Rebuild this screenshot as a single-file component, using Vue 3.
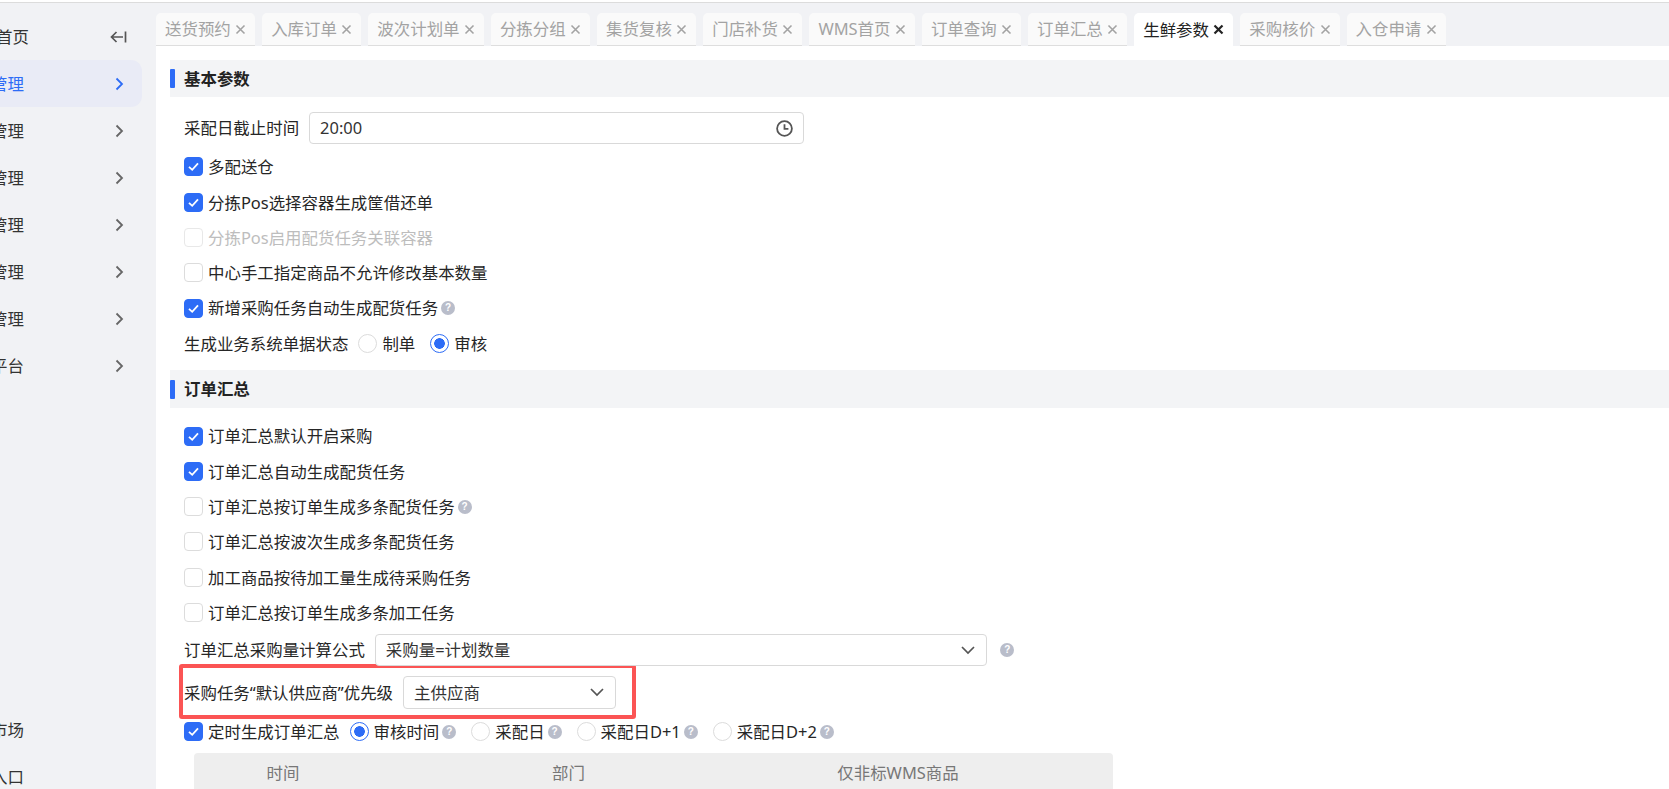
<script setup>
const tabs = ['送货预约','入库订单','波次计划单','分拣分组','集货复核','门店补货','WMS首页','订单查询','订单汇总','生鲜参数','采购核价','入仓申请']
const activeTab = '生鲜参数'
const navs = ['管理','管理','管理','管理','管理','管理','平台']
const basicChecks = [
  { t: '多配送仓', c: true },
  { t: '分拣Pos选择容器生成筐借还单', c: true },
  { t: '分拣Pos启用配货任务关联容器', d: true },
  { t: '中心手工指定商品不允许修改基本数量' },
  { t: '新增采购任务自动生成配货任务', c: true, h: true }
]
const orderChecks = [
  { t: '订单汇总默认开启采购', c: true },
  { t: '订单汇总自动生成配货任务', c: true },
  { t: '订单汇总按订单生成多条配货任务', h: true },
  { t: '订单汇总按波次生成多条配货任务' },
  { t: '加工商品按待加工量生成待采购任务' },
  { t: '订单汇总按订单生成多条加工任务' }
]
const timedRadios = [
  { t: '审核时间', on: true },
  { t: '采配日' },
  { t: '采配日D+1' },
  { t: '采配日D+2' }
]
</script>

<template>
  <div class="page">
    <div class="topline"></div>
    <div class="body">
      <aside class="side">
        <div class="nav-item">
          <span class="nav-label home">首页</span>
          <svg class="collapse" width="17" height="14" viewBox="0 0 17 14" fill="none" stroke="#555" stroke-width="1.7"><path d="M6.5 2 1.5 7l5 5M1.5 7H13M15.5 1.5v11"/></svg>
        </div>
        <div v-for="(n, i) in navs" :key="i" class="nav-item" :class="{ active: i === 0 }">
          <span class="nav-label">{{ n }}</span>
          <svg class="chev" width="16" height="16" viewBox="0 0 16 16" fill="none" stroke="currentColor" stroke-width="1.8"><path d="m5.5 2.5 5.5 5.5-5.5 5.5"/></svg>
        </div>
        <div class="side-gap"></div>
        <div class="nav-item"><span class="nav-label">市场</span></div>
        <div class="nav-item"><span class="nav-label">入口</span></div>
      </aside>
      <main class="main">
        <div class="tabs">
          <div v-for="t in tabs" :key="t" class="tab" :class="{ on: t === activeTab }">
            <span>{{ t }}</span>
            <svg width="11" height="11" viewBox="0 0 11 11" fill="none" stroke="currentColor" :stroke-width="t === activeTab ? 2.2 : 1.6"><path d="m1.5 1.5 8 8M9.5 1.5l-8 8"/></svg>
          </div>
        </div>
        <div class="content">
          <div class="section"><i class="bar"></i><b>基本参数</b></div>
          <div class="form first">
            <div class="ctl-row">
              <span>采配日截止时间</span>
              <div class="field time">
                <span>20:00</span>
                <svg width="17" height="17" viewBox="0 0 17 17" fill="none" stroke="#555" stroke-width="1.8"><circle cx="8.5" cy="8.5" r="7.4"/><path d="M8.5 4.2v4.6h3.9"/></svg>
              </div>
            </div>
            <div class="checks">
              <div v-for="c in basicChecks" :key="c.t" class="row" :class="{ disabled: c.d }">
                <span class="cb" :class="{ checked: c.c }">
                  <svg v-if="c.c" width="13" height="13" viewBox="0 0 13 13" fill="none" stroke="#fff" stroke-width="1.8"><path d="m2 6.8 3.2 3L11 3.4"/></svg>
                </span>
                <span class="txt">{{ c.t }}</span>
                <i v-if="c.h" class="help">?</i>
              </div>
              <div class="row">
                <span class="status-label">生成业务系统单据状态</span>
                <span class="rd"></span><span class="txt r-txt">制单</span>
                <span class="rd on second"></span><span class="txt r-txt">审核</span>
              </div>
            </div>
          </div>
          <div class="section two"><i class="bar"></i><b>订单汇总</b></div>
          <div class="form second-form">
            <div class="checks">
              <div v-for="c in orderChecks" :key="c.t" class="row">
                <span class="cb" :class="{ checked: c.c }">
                  <svg v-if="c.c" width="13" height="13" viewBox="0 0 13 13" fill="none" stroke="#fff" stroke-width="1.8"><path d="m2 6.8 3.2 3L11 3.4"/></svg>
                </span>
                <span class="txt">{{ c.t }}</span>
                <i v-if="c.h" class="help">?</i>
              </div>
            </div>
            <div class="ctl-row formula">
              <span>订单汇总采购量计算公式</span>
              <div class="field sel-wide">
                <span>采购量=计划数量</span>
                <svg width="16" height="16" viewBox="0 0 16 16" fill="none" stroke="#555" stroke-width="1.7"><path d="m2 5 6 6 6-6"/></svg>
              </div>
              <i class="help far">?</i>
            </div>
            <div class="mark">
              <span>采购任务“默认供应商”优先级</span>
              <div class="field sel-small">
                <span>主供应商</span>
                <svg width="16" height="16" viewBox="0 0 16 16" fill="none" stroke="#555" stroke-width="1.7"><path d="m2 5 6 6 6-6"/></svg>
              </div>
            </div>
            <div class="timed">
              <span class="cb checked">
                <svg width="13" height="13" viewBox="0 0 13 13" fill="none" stroke="#fff" stroke-width="1.8"><path d="m2 6.8 3.2 3L11 3.4"/></svg>
              </span>
              <span class="txt">定时生成订单汇总</span>
              <span v-for="r in timedRadios" :key="r.t" class="timed-opt">
                <span class="rd" :class="{ on: r.on }"></span>
                <span class="txt r-txt">{{ r.t }}</span>
                <i class="help tight">?</i>
              </span>
            </div>
            <div class="thead">
              <span>时间</span><span>部门</span><span>仅非标WMS商品</span><span></span>
            </div>
          </div>
        </div>
      </main>
    </div>
  </div>
</template>

<style>
html, body { margin: 0; background: #fff; overflow: hidden; }
</style>

<style scoped>
.page {
  width: 1669px; height: 789px; overflow: hidden; display: flex; flex-direction: column;
  background: #f1f2f5; color: #262626;
  font-family: "Noto Sans", "Noto Sans CJK SC", sans-serif; font-size: 16.45px; line-height: 1.3;
}
.topline { height: 3px; flex: none; background: #fff; border-bottom: 1px solid #dcdcdc; box-sizing: border-box; }
.body { flex: 1; display: flex; min-height: 0; }
.side { width: 156px; flex: none; overflow: hidden; padding-top: 10px; box-sizing: border-box; }
.nav-item {
  height: 47px; margin-right: 14px; padding-right: 15px; display: flex; align-items: center;
  justify-content: space-between; border-radius: 0 11px 11px 0; color: #333;
}
.nav-item .chev { color: #666; }
.nav-item.active { background: #e9ebf6; color: #2d6cf6; }
.nav-item.active .chev { color: #2d6cf6; }
.nav-label { margin-left: -9px; white-space: nowrap; }
.nav-label.home { margin-left: -4px; }
.side-gap { height: 317px; }
.main { flex: 1; min-width: 0; display: flex; flex-direction: column; }
.tabs { height: 43px; flex: none; padding-top: 10px; box-sizing: border-box; display: flex; gap: 7px; }
.tab {
  height: 33px; box-sizing: border-box; padding: 0 9px; display: flex; align-items: center; gap: 4.4px;
  background: #fafafa; border-bottom: 1px solid #dedede; border-radius: 5px 5px 0 0; color: #a3a3a3; white-space: nowrap;
}
.tab.on { background: #fff; border-bottom: 0; color: #222; }
.content { flex: 1; background: #fff; padding: 14px 0 0 14px; min-height: 0; overflow: hidden; }
.section { height: 37px; background: #f3f4f6; display: flex; align-items: center; gap: 9px; }
.section.two { height: 38px; margin-top: 9px; }
.section b { font-weight: 700; color: #222; }
.bar { width: 5px; height: 19px; background: #2d6cf6; border-radius: 1px; }
.form { padding-left: 14px; }
.form.first { padding-top: 15px; }
.ctl-row { display: flex; align-items: center; gap: 10px; height: 32px; }
.field {
  box-sizing: border-box; display: flex; align-items: center; justify-content: space-between;
  border: 1px solid #d9d9d9; border-radius: 4px; background: #fff; padding: 0 10px; color: #333;
}
.time { width: 495px; height: 32px; }
.checks { display: flex; flex-direction: column; }
.first .checks { margin-top: 5.3px; }
.second-form .checks { margin-top: 10.3px; }
.row { height: 35.3px; display: flex; align-items: center; }
.cb {
  width: 19px; height: 19px; box-sizing: border-box; flex: none; margin-right: 5px;
  border: 1px solid #dcdcdc; border-radius: 4px; background: #fff; display: flex; align-items: center; justify-content: center;
}
.cb.checked { background: #2d6cf6; border-color: #2d6cf6; }
.disabled .txt { color: #bdbdbd; }
.disabled .cb { border-color: #e8e8e8; }
.help {
  width: 14px; height: 14px; flex: none; margin-left: 3px; border-radius: 50%; background: #b9bdca; color: #fff;
  font: 700 10px/14px "Liberation Sans", sans-serif; text-align: center; display: inline-block;
}
.rd {
  width: 19px; height: 19px; box-sizing: border-box; flex: none; border-radius: 50%;
  border: 1px solid #dcdcdc; background: #fff; display: inline-block;
}
.rd.on { border-color: #2d6cf6; background: radial-gradient(circle, #2d6cf6 0 5px, #fff 5.6px); }
.rd.second { margin-left: 15px; }
.status-label { margin-right: 10px; }
.r-txt { margin-left: 5px; }
.formula { margin-top: 3.7px; }
.help.far { margin-left: 3px; }
.sel-wide { width: 612.5px; height: 32px; }
.sel-small { width: 213px; height: 33px; }
.mark {
  width: 457px; height: 55px; box-sizing: border-box; margin: -2px 0 0 -5.5px; padding: 8px 0 6px 1.5px;
  border: 4px solid #fb5454; border-radius: 3px; display: flex; align-items: center; gap: 10px; white-space: nowrap;
}
.timed { height: 26px; display: flex; align-items: center; white-space: nowrap; }
.timed > .txt { margin-right: 10px; }
.timed-opt { display: inline-flex; align-items: center; margin-right: 15px; }
.help.tight { margin-left: 3px; }
.thead {
  margin: 8px 0 0 10px; width: 919px; height: 40px; background: #eeeeee; border-radius: 4px 4px 0 0;
  display: grid; grid-template-columns: 178px 393px 266px 82px; align-items: center; justify-items: center; color: #777;
}
</style>
